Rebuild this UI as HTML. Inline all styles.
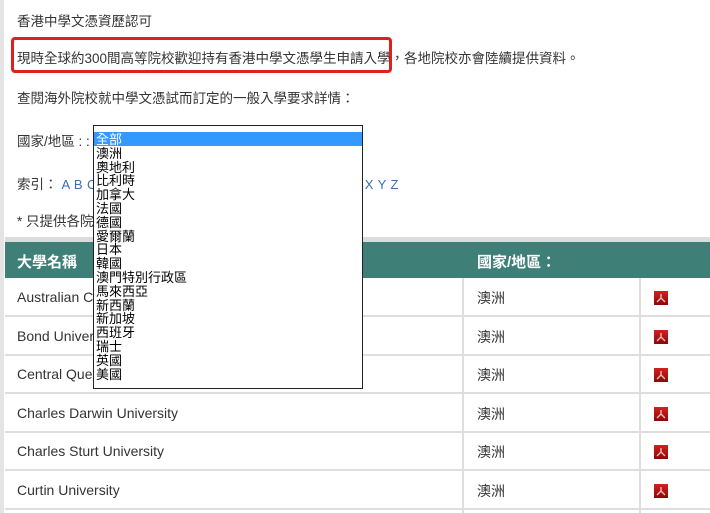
<!DOCTYPE html>
<html><head><meta charset="utf-8"><style>
*{margin:0;padding:0;box-sizing:border-box}
body{width:710px;height:513px;overflow:hidden;background:#fff;font-family:"Liberation Sans","Noto Sans CJK TC",sans-serif;font-size:13.5px;color:#333;position:relative}
.lb{position:absolute;left:0;top:0;width:4px;height:513px;background:#e4e4e4}
.t{position:absolute;left:17px;white-space:nowrap}
.red{position:absolute;left:11px;top:37px;width:381px;height:36px;border:3px solid #e0201c;border-radius:4px}
.idx{color:#3a6fb0;font-size:13px;word-spacing:0.8px;margin-left:4px}
.grey{position:absolute;left:5px;top:237px;width:705px;height:5px;background:#dcdcdc}
.hd{position:absolute;left:5px;top:242px;width:705px;height:36px;background:#3e7f78;color:#fff;font-weight:bold;font-size:15px}
.row{position:absolute;left:5px;width:705px;height:39px;border-bottom:2px solid #dedede;font-size:14px}
.c1{position:absolute;left:12px;top:11px}
.c2{position:absolute;left:472px;top:10px}
.v1{position:absolute;left:462px;top:278px;width:2px;height:235px;background:#dedede}
.v2{position:absolute;left:639px;top:278px;width:2px;height:235px;background:#dedede}
.pdf{position:absolute;left:649px;top:13px;width:14px;height:14px;background:linear-gradient(#d42020,#8a0808);}
.pdf svg{position:absolute;left:0;top:0}
.sel{position:absolute;left:93px;top:125px;width:270px;height:264px;border:1px solid #222;background:#fff;font-family:"Noto Sans CJK TC","WenQuanYi Zen Hei",sans-serif;font-size:13px;color:#000;padding-top:6px}
.sel div{height:13.8px;line-height:13.8px;padding-left:2px;white-space:nowrap}
.sel .on{background:#3399ff;color:#fff}
</style></head><body>
<div class="lb"></div>
<div class="t" style="top:10px">香港中學文憑資歷認可</div>
<div class="red"></div>
<div class="t" style="top:47px">現時全球約300間高等院校歡迎持有香港中學文憑學生申請入學，各地院校亦會陸續提供資料。</div>
<div class="t" style="top:87px">查閱海外院校就中學文憑試而訂定的一般入學要求詳情：</div>
<div class="t" style="top:130px">國家/地區 : :</div>
<div class="t" style="top:173px">索引：<span class="idx">A B C D E F G H I J K L M N O P Q R S T U V W X Y Z</span></div>
<div class="t" style="top:210px">* 只提供各院校資料</div>
<div class="grey"></div>
<div class="hd"><span style="position:absolute;left:12px;top:9px">大學名稱</span><span style="position:absolute;left:472px;top:9px">國家/地區：</span></div>
<div class="row" style="top:278px"><span class="c1">Australian Catholic University</span><span class="c2">澳洲</span><div class="pdf"><svg width="14" height="14"><path d="M7 3 L7 7 M7 7 L3 11 M7 7 L11 11" stroke="#f3c0c0" stroke-width="1.3" fill="none"/></svg></div></div>
<div class="row" style="top:317px"><span class="c1">Bond University</span><span class="c2">澳洲</span><div class="pdf"><svg width="14" height="14"><path d="M7 3 L7 7 M7 7 L3 11 M7 7 L11 11" stroke="#f3c0c0" stroke-width="1.3" fill="none"/></svg></div></div>
<div class="row" style="top:355px"><span class="c1">Central Queensland University</span><span class="c2">澳洲</span><div class="pdf"><svg width="14" height="14"><path d="M7 3 L7 7 M7 7 L3 11 M7 7 L11 11" stroke="#f3c0c0" stroke-width="1.3" fill="none"/></svg></div></div>
<div class="row" style="top:394px"><span class="c1">Charles Darwin University</span><span class="c2">澳洲</span><div class="pdf"><svg width="14" height="14"><path d="M7 3 L7 7 M7 7 L3 11 M7 7 L11 11" stroke="#f3c0c0" stroke-width="1.3" fill="none"/></svg></div></div>
<div class="row" style="top:432px"><span class="c1">Charles Sturt University</span><span class="c2">澳洲</span><div class="pdf"><svg width="14" height="14"><path d="M7 3 L7 7 M7 7 L3 11 M7 7 L11 11" stroke="#f3c0c0" stroke-width="1.3" fill="none"/></svg></div></div>
<div class="row" style="top:471px"><span class="c1">Curtin University</span><span class="c2">澳洲</span><div class="pdf"><svg width="14" height="14"><path d="M7 3 L7 7 M7 7 L3 11 M7 7 L11 11" stroke="#f3c0c0" stroke-width="1.3" fill="none"/></svg></div></div>
<div class="v1"></div><div class="v2"></div>
<div class="sel">
<div class="on">全部</div><div>澳洲</div><div>奧地利</div><div>比利時</div><div>加拿大</div><div>法國</div><div>德國</div><div>愛爾蘭</div><div>日本</div><div>韓國</div><div>澳門特別行政區</div><div>馬來西亞</div><div>新西蘭</div><div>新加坡</div><div>西班牙</div><div>瑞士</div><div>英國</div><div>美國</div>
</div>
</body></html>
